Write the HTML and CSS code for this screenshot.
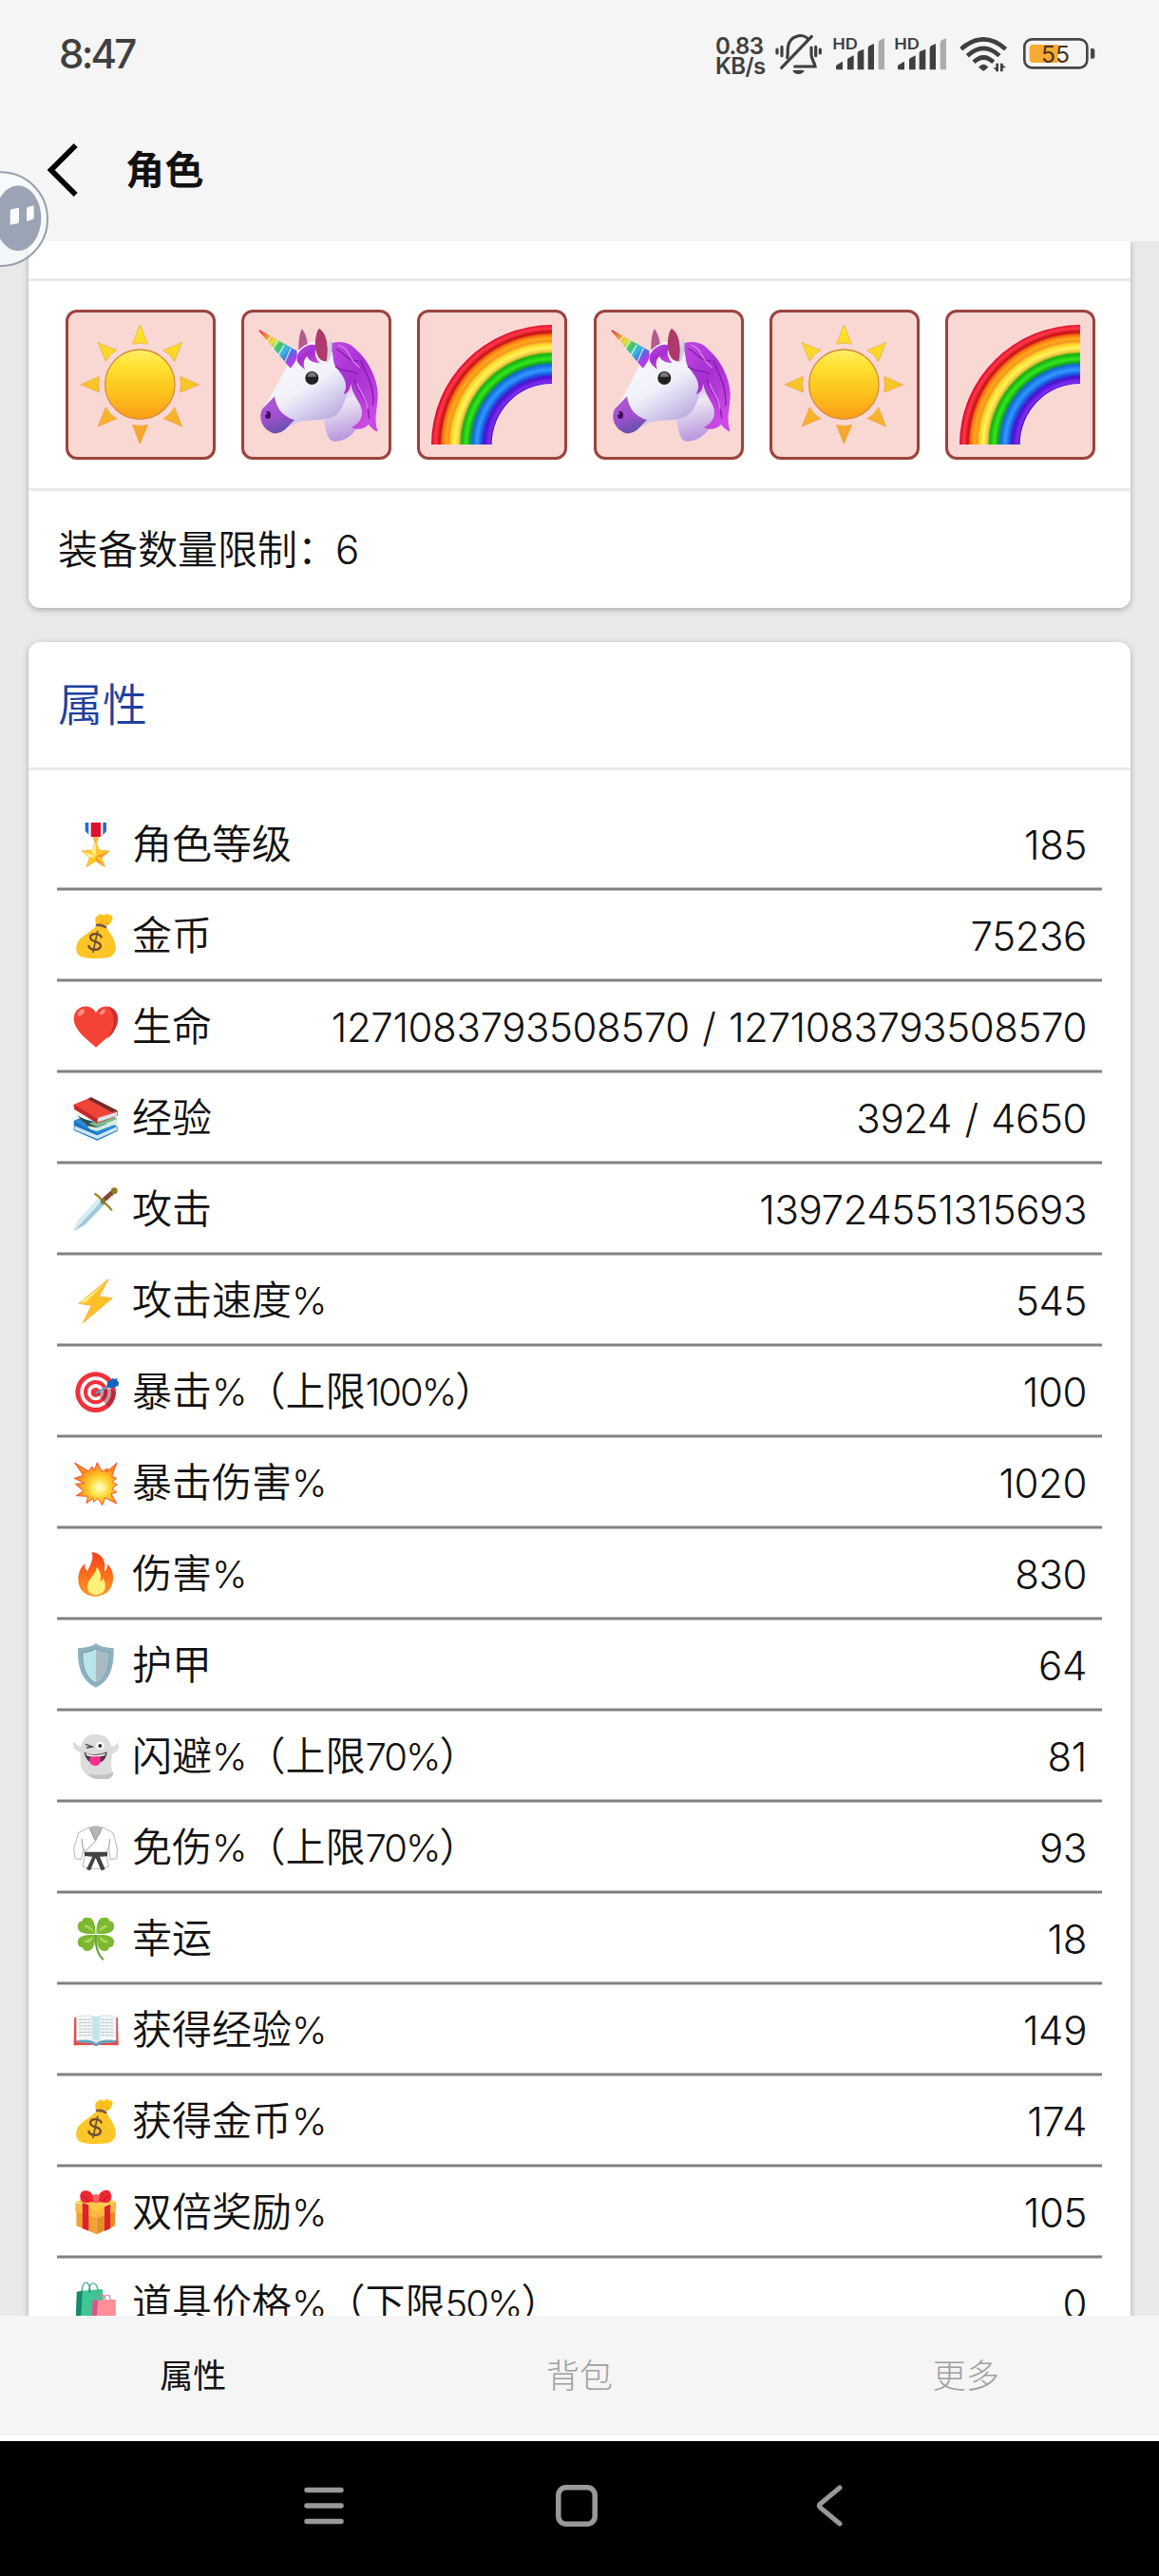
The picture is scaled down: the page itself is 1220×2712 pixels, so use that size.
FILE: index.html
```html
<!DOCTYPE html>
<html lang="zh-CN">
<head>
<meta charset="utf-8">
<title>角色</title>
<link rel="stylesheet" href="styles.css">
</head>
<body>
<svg class="defs" width="0" height="0" aria-hidden="true">
  <defs>
    <linearGradient id="sunDisc" x1="0" y1="0" x2="0" y2="1"><stop offset="0" stop-color="#fff06a"/><stop offset=".25" stop-color="#ffe02e"/><stop offset=".6" stop-color="#fdc41c"/><stop offset="1" stop-color="#fb9d18"/></linearGradient>
    <linearGradient id="sunRay" gradientUnits="userSpaceOnUse" x1="0" y1="185" x2="0" y2="565"><stop offset="0" stop-color="#fde725"/><stop offset="1" stop-color="#f5a22c"/></linearGradient>
    <linearGradient id="face" x1="0" y1="0" x2=".6" y2="1"><stop offset="0" stop-color="#fff"/><stop offset=".6" stop-color="#f0f1fa"/><stop offset="1" stop-color="#b9a9e0"/></linearGradient>
    <linearGradient id="neck" x1="0" y1="0" x2=".2" y2="1"><stop offset="0" stop-color="#b7a7df"/><stop offset=".4" stop-color="#f1e6f4"/><stop offset="1" stop-color="#b99adf"/></linearGradient>
    <linearGradient id="muzzle" x1="0" y1="0" x2=".3" y2="1"><stop offset="0" stop-color="#b05ad6"/><stop offset=".6" stop-color="#a24fd0"/><stop offset="1" stop-color="#6a51ae"/></linearGradient>
    <linearGradient id="mane" x1="0" y1="0" x2=".6" y2="1"><stop offset="0" stop-color="#c14ae6"/><stop offset=".5" stop-color="#a62fd0"/><stop offset="1" stop-color="#cc49e4"/></linearGradient>
    <linearGradient id="horn" gradientUnits="userSpaceOnUse" x1="698" y1="206" x2="808" y2="308"><stop offset="0" stop-color="#e2324a"/><stop offset=".2" stop-color="#f29a3a"/><stop offset=".36" stop-color="#e8e03c"/><stop offset=".52" stop-color="#3fc46a"/><stop offset=".68" stop-color="#37b6e6"/><stop offset=".8" stop-color="#4a70dd"/><stop offset=".92" stop-color="#b23bea"/></linearGradient>
    <radialGradient id="bow" gradientUnits="userSpaceOnUse" cx="486" cy="504" r="381"><stop offset=".49" stop-color="#3d0a9a"/><stop offset=".52" stop-color="#7d2df2"/><stop offset=".56" stop-color="#4d0fd0"/><stop offset=".585" stop-color="#1c55e0"/><stop offset=".62" stop-color="#2f9bff"/><stop offset=".66" stop-color="#1668e0"/><stop offset=".68" stop-color="#16a51c"/><stop offset=".71" stop-color="#33e81c"/><stop offset=".75" stop-color="#17b012"/><stop offset=".77" stop-color="#f0c23a"/><stop offset=".8" stop-color="#fff35a"/><stop offset=".835" stop-color="#ffd726"/><stop offset=".855" stop-color="#f7951c"/><stop offset=".88" stop-color="#ffa91c"/><stop offset=".91" stop-color="#f56d10"/><stop offset=".93" stop-color="#c90f14"/><stop offset=".965" stop-color="#ff3a48"/><stop offset="1" stop-color="#d8002a"/></radialGradient>
    <radialGradient id="boom" gradientUnits="userSpaceOnUse" cx="165" cy="1038" r="75"><stop offset="0" stop-color="#fffde0"/><stop offset=".22" stop-color="#fff176"/><stop offset=".5" stop-color="#ffca28"/><stop offset=".9" stop-color="#fb8c1c"/></radialGradient>
    <linearGradient id="flame" x1="0" y1="0" x2="0" y2="1"><stop offset="0" stop-color="#f4401f"/><stop offset=".5" stop-color="#ff6d1b"/><stop offset="1" stop-color="#ff9a2a"/></linearGradient>

    <symbol id="sun" viewBox="97 147 456 456">
      <g fill="url(#sunRay)" stroke="#e5a54a" stroke-width="2">
        <path d="M323 186L299 247Q323 240 348 247Z"/><path d="M323 562L299 502Q323 508 348 502Z"/>
        <path d="M135 375L195 349Q190 375 195 399Z"/><path d="M510 375L450 349Q454 375 450 399Z"/>
        <path d="M190 242L249 266Q228 278 215 301Z"/><path d="M456 242L396 266Q418 278 432 302Z"/>
        <path d="M190 507L215 446Q228 470 250 482Z"/><path d="M456 507L432 446Q418 470 397 482Z"/>
      </g>
      <circle cx="323" cy="374" r="110" fill="url(#sunDisc)" stroke="#d98a3e" stroke-width="4"/>
    </symbol>

    <symbol id="unicorn" viewBox="651 147 456 456">
      <path fill="url(#neck)" d="M895 470C912 500 905 553 938 554C985 552 1000 520 1015 505L1028 440L975 370L900 440Z"/>
      <path fill="#b55a8c" d="M824 275C820 240 828 205 834 199C845 215 852 235 852 262Z"/>
      <path fill="url(#face)" d="M822 268C850 235 905 225 940 262C985 300 1000 380 955 455C935 490 880 485 835 490C790 500 775 530 745 525C705 512 695 480 710 450C735 415 750 385 770 345C785 320 800 290 822 268Z"/>
      <path fill="url(#muzzle)" d="M747 412C752 450 775 478 811 487C790 500 782 530 745 529C706 515 695 478 708 452Z"/>
      <ellipse cx="726" cy="471" rx="9" ry="12" fill="#3b0d5c"/><circle cx="719" cy="466" r="4" fill="#b05ad6"/>
      <path fill="url(#mane)" d="M918 248C945 233 985 240 1005 265C1040 295 1070 350 1073 400C1074 450 1058 480 1073 523C1060 520 1050 508 1044 500C1030 515 1010 520 990 510C1020 495 1030 470 1018 440C1005 415 990 395 988 372C985 395 975 403 965 405C985 370 960 345 940 318C928 298 936 270 918 248Z"/>
      <g fill="none" stroke="#7e1cab" stroke-width="4" stroke-linecap="round"><path d="M942 262C960 270 985 305 1012 300"/><path d="M940 318C965 340 985 325 1006 340"/><path d="M1000 360C1010 400 1045 430 1046 480"/><path d="M1020 300C1040 350 1062 380 1058 440"/></g>
      <g fill="none" stroke="#dd7df5" stroke-width="4" stroke-linecap="round"><path d="M950 250C990 265 975 290 1015 320"/><path d="M1008 372C1020 405 1038 420 1040 450"/></g>
      <path fill="#cfd0e0" d="M926 225C932 260 928 290 912 306L900 290Z"/>
      <path fill="#ad3a68" d="M888 197C915 215 918 260 911 300C890 306 876 280 875 250C876 225 880 205 888 197Z"/>
      <path fill="url(#mane)" d="M879 252C858 240 825 262 818 285C815 305 828 315 843 327C836 305 840 295 850 285C855 300 868 305 890 307C875 292 872 272 879 252Z"/>
      <path fill="url(#horn)" d="M698 206C695 202 702 202 704 204L817 268C820 285 818 300 797 323Z"/>
      <g stroke="#fff" stroke-width="4" stroke-linecap="round" fill="none" opacity=".75"><path d="M722 240L735 223"/><path d="M741 262L756 236"/><path d="M760 280L777 250"/><path d="M780 302L798 262"/></g>
      <circle cx="865" cy="354" r="21" fill="#202020"/><path fill="#777" d="M851 350A14 14 0 0 1 879 350Z"/>
    </symbol>

    <symbol id="rainbow" viewBox="69 87 456 456">
      <path fill="url(#bow)" d="M105 504A381 378 0 0 1 486 126V312A190 192 0 0 0 296 504Z"/>
    </symbol>

    <symbol id="moneybag" viewBox="79 357 150 150">
      <path fill="#fcc21b" d="M154 400C150 385 152 372 160 374C166 364 174 368 178 372C186 364 196 366 198 372C208 366 208 380 204 388C200 398 192 404 186 404Z"/>
      <path fill="none" stroke="#f19534" stroke-width="3" d="M168 398L176 384M186 402L194 390"/>
      <path fill="#fcc528" d="M157 403L188 408C194 425 212 440 216 467C219 490 205 502 190 505C165 508 130 508 112 503C94 499 88 483 93 464C98 440 140 424 157 403Z"/>
      <path fill="none" stroke="#795548" stroke-width="8" stroke-linecap="round" d="M157 402Q172 400 184 408"/>
      <g fill="none" stroke="#6d4c36" stroke-width="7" stroke-linecap="round"><path d="M171 440C166 427 139 425 136 440C135 458 170 450 169 468C166 484 136 482 131 468"/><path stroke-width="5" d="M159 421L145 487"/></g>
    </symbol>
  </defs>
</svg>

<div class="screen">
  <header class="top">
    <div class="status">
      <span class="clock">8:47</span>
      <span class="speed"><span>0.83</span><span>KB/s</span></span>
      <svg class="bell" viewBox="285 45 153 129" width="51" height="43" fill="none" stroke="#3f3f3f" stroke-width="9.5" stroke-linecap="round">
        <path d="M294 96V108M309 88V116M416 88V116M430 96V108"/>
        <path d="M326 122C329 112 327 100 328 90C332 50 378 44 392 64M402 90V112C402 126 411 134 414 150H350"/>
        <path d="M403 55L308 154"/>
        <path d="M343 162H380Q376 174 361 174Q347 174 343 162Z" fill="#3f3f3f" stroke="none"/>
      </svg>
      <svg class="signal" viewBox="468 45 168 129" width="56" height="43">
        <text class="hd" x="469" y="96" textLength="80" lengthAdjust="spacingAndGlyphs">HD</text>
        <g fill="#3f3f3f"><path d="M480 150Q480 147 483 145L501 134V160H484Q480 160 480 156Z"/><path d="M516 129Q516 126 519 124L536 115V160H516Z"/><path d="M548 108Q548 104 551 102L568 95V160H548Z"/><path d="M581 94Q581 87 585 85L600 78V160H581Z"/></g>
        <path fill="#acacac" d="M614 78Q614 70 618 67L633 61V160H614Z"/>
      </svg>
      <svg class="signal second" viewBox="468 45 168 129" width="56" height="43">
        <text class="hd" x="469" y="96" textLength="80" lengthAdjust="spacingAndGlyphs">HD</text>
        <g fill="#3f3f3f"><path d="M480 150Q480 147 483 145L501 134V160H484Q480 160 480 156Z"/><path d="M516 129Q516 126 519 124L536 115V160H516Z"/><path d="M548 108Q548 104 551 102L568 95V160H548Z"/><path d="M581 94Q581 87 585 85L600 78V160H581Z"/></g>
        <path fill="#acacac" d="M614 78Q614 70 618 67L633 61V160H614Z"/>
      </svg>
      <svg class="wifi" viewBox="867 45 159 129" width="53" height="43" fill="none" stroke="#3f3f3f" stroke-width="14">
        <path d="M875 95Q946 33 1016 95"/><path d="M895 116Q946 69 996 116"/><path d="M915 136Q946 107 977 136"/>
        <path d="M930 152Q946 134 961 152L946 165Z" fill="#3f3f3f" stroke="none"/>
        <path d="M989 140V166M1003 140V166" stroke-width="8"/><path d="M976 154H990V166ZM1017 154H1002V141Z" fill="#3f3f3f" stroke="none"/>
      </svg>
      <svg class="battery" viewBox="1065 45 234 129" width="78" height="43">
        <rect x="1075" y="64" width="198" height="90" rx="24" fill="none" stroke="#474747" stroke-width="8"/>
        <path fill="#f7ab33" d="M1102 81H1181V138H1102Q1091 138 1091 127V92Q1091 81 1102 81Z"/>
        <path fill="#474747" d="M1284 93H1291Q1297 93 1297 99V119Q1297 125 1291 125H1284Z"/>
        <text class="charge" x="1128" y="137" textLength="90" lengthAdjust="spacingAndGlyphs">55</text>
      </svg>
    </div>
    <div class="titlebar">
      <svg class="back" viewBox="147 450 102 174" width="34" height="58" fill="none" stroke="#000" stroke-width="17"><path d="M239 459L161 537L239 615"/></svg>
      <h1>角色</h1>
    </div>
  </header>

  <svg class="bubble" viewBox="0 528 165 330" width="55" height="110">
    <circle cx="2" cy="692" r="148" fill="#f8fcff" fill-opacity=".72" stroke="#97a0ac" stroke-width="6"/>
    <ellipse cx="57" cy="689" rx="73" ry="103" fill="#959fb0" fill-opacity=".95"/>
    <path fill="#f8fcff" d="M39 660L60 656V700Q60 704 55 706L32 710V670Q32 661 39 660ZM90 653L107 649V688Q107 692 102 694L84 699V662Q84 655 90 653Z"/>
  </svg>

  <main class="content">
    <section class="card equip">
      <div class="equip-head"></div>
      <div class="tiles">
        <div class="tile"><svg><use href="#sun"/></svg></div>
        <div class="tile"><svg><use href="#unicorn"/></svg></div>
        <div class="tile"><svg><use href="#rainbow"/></svg></div>
        <div class="tile"><svg><use href="#unicorn"/></svg></div>
        <div class="tile"><svg><use href="#sun"/></svg></div>
        <div class="tile"><svg><use href="#rainbow"/></svg></div>
      </div>
      <p class="limit">装备数量限制：<span class="num">6</span></p>
    </section>

    <section class="card">
      <h2>属性</h2>
      <ul class="stats">
        <li><svg viewBox="79 69 150 150"><path fill="#1f6fd0" d="M120 78H187V105L176 117H132L120 105Z"/><path fill="#fff" d="M131 78H176V122H131Z"/><path fill="#dd1030" d="M138 78H169V123H138Z"/><path fill="#fcb43a" d="M143 124H164L158 140H150Z"/><path fill="#ffca28" stroke="#f0a030" stroke-width="2" d="M153 137L164 165L197 168L172 188L182 218L153 200L124 218L134 188L109 168L142 165Z"/><path fill="#fff09a" d="M153 140V184L140 168ZM112 169L153 184L136 189Z"/><path fill="#f79a30" d="M153 184L195 169L171 189ZM153 184L181 216L153 198Z"/></svg><span class="label">角色等级</span><span class="value">185</span></li>
        <li><svg><use href="#moneybag"/></svg><span class="label">金币</span><span class="value">75236</span></li>
        <li><svg viewBox="79 645 150 150"><path fill="#f44336" d="M154 788C135 770 84 735 84 698C84 655 137 645 154 679C171 645 224 655 224 698C224 735 173 770 154 788Z"/><path fill="#c53230" d="M194 661C228 668 236 725 188 762C215 725 218 690 194 661Z"/><ellipse cx="107" cy="678" rx="8" ry="13" transform="rotate(42 107 678)" fill="#ff8a80"/><ellipse cx="175" cy="676" rx="6" ry="11" transform="rotate(42 175 676)" fill="#ff8a80"/></svg><span class="label">生命</span><span class="value">1271083793508570 / 1271083793508570</span></li>
        <li><svg viewBox="79 933 150 150"><path fill="#1b77c5" d="M84 1020L103 1012L222 1038V1052L158 1082L84 1050Z"/><path fill="#cfe6f2" d="M86 1036L158 1066L220 1038V1050L158 1078L86 1048Z"/><path fill="#2d8ed3" d="M84 1020L158 1060L222 1036L205 1030L158 1050L100 1014Z"/><path fill="#3c4a40" d="M94 1003L138 1045L158 1050L150 1030Z"/><path fill="#7cb98a" d="M132 1028L207 1005L222 1014L158 1040Z"/><path fill="#d5eedd" d="M128 1036L158 1042L220 1016V1030L158 1052Q130 1050 128 1036Z"/><path fill="#c62828" d="M83 968L98 972L158 1012L222 988V1004L158 1028L86 984Z"/><path fill="#dfe3ee" d="M160 1011L220 992V1004L158 1025Z"/><path fill="#f04438" d="M84 968L139 946L222 988L158 1012Z"/><path fill="#6d2c2c" d="M139 946L222 988L205 993L128 951Z"/></svg><span class="label">经验</span><span class="value">3924 / 4650</span></li>
        <li><svg viewBox="79 81 150 150"><path fill="#9fc9d8" d="M84 229L96 197L163 124L182 143L118 209Z"/><path fill="#d6ecf5" d="M84 229L96 197L163 124L172 133Z"/><path stroke="#8c4a35" stroke-width="14" fill="none" d="M174 134L211 101"/><path stroke="#5c2f22" stroke-width="2" fill="none" d="M181 119L193 132M189 112L201 125M197 104L209 117"/><path stroke="#a98724" stroke-width="7" stroke-linecap="round" fill="none" d="M152 111Q170 124 176 135Q190 145 203 161"/><circle cx="212" cy="101" r="10" fill="#94781f"/><circle cx="176" cy="135" r="8" fill="#7d7a35"/></svg><span class="label">攻击</span><span class="value">139724551315693</span></li>
        <li><svg viewBox="79 369 150 150"><path fill="#fec029" stroke="#f9a825" stroke-width="2" stroke-linejoin="round" d="M195 379L99 457L140 463L112 519L206 440L164 434Z"/><path fill="#fff080" d="M185 392L104 454L118 455Z"/></svg><span class="label">攻击速度<span class="num">%</span></span><span class="value">545</span></li>
        <li><svg viewBox="79 657 150 150"><circle cx="153" cy="737" r="64" fill="#f0313c"/><circle cx="153" cy="737" r="49" fill="#fff"/><circle cx="153" cy="737" r="38" fill="#f0313c"/><circle cx="153" cy="737" r="26" fill="#fff"/><circle cx="153" cy="738" r="15" fill="#f0313c"/><path fill="#7f1630" opacity=".45" d="M158 742L196 724L217 738Q212 770 194 785Z"/><path stroke="#5a9fce" stroke-width="7" d="M154 740L200 714"/><path fill="#1565c0" d="M190 706L207 693L213 696L221 692V702L226 704L225 716L208 724L188 722Z"/></svg><span class="label">暴击<span class="num">%</span>（上限<span class="num">100%</span>）</span><span class="value">100</span></li>
        <li><svg viewBox="79 945 150 150"><path fill="url(#boom)" stroke="#f4512c" stroke-width="3" d="M87 960L131 987L141 972L149 984L158 959L172 987L193 978L187 990L220 960L204 1003L219 1009L206 1020L220 1029L205 1042L219 1053L202 1058L219 1089L183 1070L174 1094L160 1072L147 1084L145 1072L124 1088L129 1066L92 1064L114 1049L89 1027L118 1025L86 1009L114 1000Z"/></svg><span class="label">暴击伤害<span class="num">%</span></span><span class="value">1020</span></li>
        <li><svg viewBox="79 93 150 150"><path fill="url(#flame)" d="M140 103C170 103 188 130 181 162C187 160 190 150 190 140C204 150 210 172 208 190C205 222 182 242 153 242C122 242 98 222 98 188C98 165 108 147 119 139C118 150 121 158 127 162C135 145 150 120 140 103Z"/><path fill="#fff07a" d="M156 150C154 170 134 184 128 202C122 225 136 237 153 237C173 237 187 224 183 202C181 192 178 190 177 183C175 190 172 194 167 194C172 178 168 160 156 150Z"/></svg><span class="label">伤害<span class="num">%</span></span><span class="value">830</span></li>
        <li><svg viewBox="79 381 150 150"><path fill="#8fb0bf" d="M154 391C168 402 190 404 210 406C212 470 195 512 154 530C113 512 94 470 97 406C118 404 140 402 154 391Z"/><path fill="#b9e4ea" stroke="#5f8090" stroke-width="2" d="M154 407C166 415 180 418 196 419C197 465 185 500 154 516C122 500 110 465 112 419C128 418 142 415 154 407Z"/><path fill="#a9bac2" d="M154 409C166 416 180 419 194 420C195 464 184 498 154 514Z"/></svg><span class="label">护甲</span><span class="value">64</span></li>
        <li><svg viewBox="79 669 150 150"><path fill="#dcdcdc" d="M105 735C90 730 82 722 81 706C84 700 90 702 92 710L106 717C110 690 130 677 154 677C180 677 200 692 203 717L216 712Q215 704 222 706C228 711 227 722 222 729Q214 738 204 740C203 765 198 790 210 800C206 816 190 822 168 821C130 818 106 795 105 765Z"/><path fill="#c2c2c2" d="M127 802C155 807 180 808 208 798C210 815 185 824 165 821C148 819 136 812 127 802Z"/><circle cx="167" cy="714" r="12" fill="#fff"/><circle cx="167" cy="714" r="6" fill="#333"/><path fill="none" stroke="#444" stroke-width="4" d="M121 709L142 717L124 720"/><path fill="#4a3b3f" d="M117 734Q150 750 189 733C187 757 172 770 152 770C133 769 120 755 117 734Z"/><path fill="#fff" d="M122 738Q150 750 184 738L182 744Q150 754 124 744Z"/><path fill="#ff2f91" d="M134 752Q152 745 168 750V764Q164 778 151 777Q137 775 134 764Z"/></svg><span class="label">闪避<span class="num">%</span>（上限<span class="num">70%</span>）</span><span class="value">81</span></li>
        <li><svg viewBox="79 957 150 150"><path fill="#fff" stroke="#a8a8a8" stroke-width="2.5" d="M132 971L99 989L84 1040L88 1070L108 1073L114 1035L120 1052L113 1096Q150 1108 194 1096L187 1052L194 1035L200 1073L219 1070L222 1040L208 989L174 971L152 1012Z"/><path fill="#b5b5b5" d="M136 970Q153 963 171 970L168 990L152 1010L140 990Z"/><path fill="none" stroke="#999" stroke-width="3" d="M134 972L151 1012M174 972L152 1015L120 1048M109 1008L112 1035M198 1008L195 1035"/><path fill="#424242" d="M117 1049H190V1063L166 1064L183 1104L171 1108L153 1068L136 1108L124 1104L143 1064L118 1062Z"/></svg><span class="label">免伤<span class="num">%</span>（上限<span class="num">70%</span>）</span><span class="value">93</span></li>
        <li><svg viewBox="73.7 105 140 150" preserveAspectRatio="none"><path fill="none" stroke="#689f38" stroke-width="6" d="M144 170C140 205 150 235 166 250"/><g fill="#7cb931"><path d="M142 167C115 170 92 166 90 148C88 135 96 126 103 129C102 117 116 113 127 118C140 125 142 145 142 167Z"/><path d="M145 167C172 170 195 166 197 148C199 135 191 126 184 129C185 117 171 113 160 118C147 125 145 145 145 167Z"/><path d="M141 172C115 168 92 174 90 191C89 204 97 212 104 210C106 222 118 226 128 219C140 210 142 192 141 172Z"/><path d="M147 172C172 168 195 174 197 191C198 204 190 212 183 210C181 222 169 226 159 219C147 210 146 192 147 172Z"/></g><g fill="#aed65a"><path d="M138 162L108 144Q122 132 138 162ZM150 162L180 144Q164 132 150 162ZM137 176L107 193Q124 204 137 176ZM151 176L181 193Q164 204 151 176Z"/></g></svg><span class="label">幸运</span><span class="value">18</span></li>
        <li><svg viewBox="73.7 393 140 150" preserveAspectRatio="none"><path fill="#e24b50" d="M80 431L90 434V510L136 512L144 518L152 512L199 510V434L208 431L210 520L152 519L144 523L136 519L78 520Z"/><path fill="#5fa3c0" d="M88 503Q125 497 144 513Q165 497 200 503V511Q165 508 144 522Q125 508 88 511Z"/><path fill="#f6f8f8" stroke="#b9c7cb" stroke-width="1.5" d="M86 430Q125 420 144 432Q165 420 203 430V505Q165 498 144 511Q125 498 86 505Z"/><path fill="#c5e5ea" d="M132 426Q140 427 144 432Q150 426 156 426V501Q148 504 144 510Q140 503 132 501Z"/><path stroke="#9aa5a8" stroke-width="2" fill="none" stroke-dasharray="11 2" d="M93 439L130 438M93 449L130 448M93 459L130 458M93 469L130 468M93 479L130 478M93 489L130 488M158 438L196 439M158 448L196 449M158 458L196 459M158 468L196 469M158 478L196 479M158 488L196 489"/></svg><span class="label">获得经验<span class="num">%</span></span><span class="value">149</span></li>
        <li><svg><use href="#moneybag"/></svg><span class="label">获得金币<span class="num">%</span></span><span class="value">174</span></li>
        <li><svg viewBox="73.7 969 140 150" preserveAspectRatio="none"><path fill="#f2a133" d="M86 1040L146 1060V1117L86 1090Z"/><path fill="#e58f28" d="M146 1060L200 1040V1090L146 1117Z"/><path fill="#fbb844" d="M83 1016L146 1040L203 1014V1044L146 1066L83 1046Z"/><path fill="#ffc94d" d="M83 1014L144 995L203 1014L146 1042Z"/><path fill="#e0202c" d="M104 1018L122 1024V1106L104 1098ZM169 1030L186 1022V1099L169 1107Z"/><path fill="#ffca3c" d="M126 1036L146 1025L166 1032L146 1046Z"/><path fill="#f02534" d="M144 1012C110 1022 96 1018 97 996C98 975 118 976 128 984Q138 994 144 1012ZM144 1012C175 1022 190 1018 189 996C188 972 168 974 158 984Q148 994 144 1012Z"/><path fill="#f9625f" d="M133 996Q144 984 155 996L150 1018H138Z"/><path fill="none" stroke="#b7151f" stroke-width="3" d="M105 995Q112 1000 122 1012M182 994Q172 1000 166 1012"/></svg><span class="label">双倍奖励<span class="num">%</span></span><span class="value">105</span></li>
        <li><svg viewBox="73.7 1257 140 150" preserveAspectRatio="none"><path fill="#3fc693" d="M101 1295L163 1290L170 1400H99Z"/><path fill="#178a6d" d="M87 1299L104 1294L99 1400L84 1385Z"/><g fill="none" stroke="#2b9a85" stroke-width="3"><path d="M103 1300C100 1258 128 1258 127 1302M123 1300C122 1262 148 1262 150 1299"/></g><path fill="#ff8f95" d="M146 1326L202 1322V1402H146Z"/><path fill="#d8578c" d="M134 1324L150 1326L144 1402L131 1392Z"/><g fill="none" stroke="#d17890" stroke-width="3"><path d="M148 1330C145 1300 172 1300 172 1329M164 1326C168 1300 188 1305 186 1325"/></g></svg><span class="label">道具价格<span class="num">%</span>（下限<span class="num">50%</span>）</span><span class="value">0</span></li>
      </ul>
    </section>
  </main>

  <nav class="tabs"><span class="active">属性</span><span>背包</span><span>更多</span></nav>
  <footer class="sysnav">
    <svg viewBox="0 0 44 44" width="44" height="44" stroke="#999" stroke-width="5.5" stroke-linecap="round"><path d="M4 5.5H40M4 22H40M4 38.5H40"/></svg>
    <svg viewBox="0 0 44 44" width="44" height="44" fill="none" stroke="#999" stroke-width="5.5"><rect x="2.8" y="2.8" width="38.4" height="38.4" rx="8"/></svg>
    <svg viewBox="0 0 44 44" width="44" height="44" fill="none" stroke="#999" stroke-width="5" stroke-linecap="round" stroke-linejoin="round"><path d="M33 3L12.500 20Q10 22 12.500 24L33 41"/></svg>
  </footer>
</div>
</body>
</html>
```
FILE: styles.css
```css
* { box-sizing: border-box; }
body, h1, h2, p, ul { margin: 0; padding: 0; }
body {
  font-family: Inter, "Noto Sans CJK SC", sans-serif;
  color: #111;
  background: #000;
}
svg { display: block; flex: none; }
.defs { position: absolute; }
.screen {
  position: relative;
  width: 1220px;
  height: 2712px;
  display: flex;
  flex-direction: column;
  overflow: hidden;
}

.top { height: 254px; flex: none; background: #f5f5f5; }
.status {
  display: flex;
  align-items: flex-start;
  height: 120px;
  padding: 35px 67px 0 62px;
  color: #3f3f3f;
}
.clock { font-size: 42px; line-height: 44px; font-weight: 500; letter-spacing: -2.8px; }
.speed {
  display: flex;
  flex-direction: column;
  margin-left: auto;
  width: 54px;
  font-size: 24px;
  line-height: 21px;
  font-weight: 600;
  letter-spacing: -0.6px;
  padding-top: 3px;
}
.bell { margin-left: 8px; }
.signal { margin-left: 10px; }
.signal.second { margin-left: 9px; }
.wifi { margin-left: 12px; }
.battery { margin-left: 13px; }
.hd { font-size: 49px; font-weight: 600; fill: #3f3f3f; }
.charge { font-size: 73px; font-weight: 400; fill: #4a3416; }
.titlebar {
  display: flex;
  align-items: center;
  height: 118px;
  padding-left: 49px;
}
.titlebar h1 { margin-left: 49px; font-size: 41px; line-height: 60px; font-weight: 600; letter-spacing: 0.5px; }

.bubble { position: absolute; left: 0; top: 176px; z-index: 3; }

.content {
  height: 2184px;
  flex: none;
  overflow: hidden;
  padding: 0 30px;
  background: #e9e9e9;
}
.card {
  background: #fff;
  border-radius: 12px;
  box-shadow: 0 2px 6px rgba(0, 0, 0, .28);
}
.equip { border-radius: 0 0 12px 12px; margin-bottom: 36px; }
.equip-head { height: 42px; border-bottom: 3px solid #e9e9e9; }
.tiles {
  display: flex;
  justify-content: space-between;
  height: 221px;
  padding: 30px 37px 0 39px;
  border-bottom: 3px solid #e9e9e9;
}
.tile {
  width: 158px;
  height: 158px;
  border: 3px solid #9c433d;
  border-radius: 12px;
  background: #f9d8d4;
}
.tile svg { width: 152px; height: 152px; }
.limit { height: 123px; padding-left: 31px; font-size: 42px; line-height: 124px; font-weight: 350; }
.limit .num { margin-left: -2px; }
h2 {
  height: 135px;
  padding-left: 31px;
  border-bottom: 3px solid #e9e9e9;
  color: #1f3f9f;
  font-size: 47px;
  line-height: 132px;
  font-weight: 350;
}

.stats { list-style: none; padding: 30px; }
.stats li {
  display: flex;
  align-items: center;
  height: 96px;
  padding: 0 16px;
  border-bottom: 2px solid #808080;
  box-shadow: 0 1px #c0c0c0, inset 0 -1px #c0c0c0;
  font-size: 42px;
  line-height: 60px;
  font-weight: 350;
  white-space: nowrap;
}
.stats svg { width: 50px; height: 50px; }
.label { margin-left: 13px; padding-top: 2px; }
.label .num { font-size: 40px; letter-spacing: -2px; }
.value { margin-left: auto; padding-top: 3px; letter-spacing: -0.4px; word-spacing: 2px; }

.tabs {
  display: flex;
  align-items: center;
  height: 132px;
  flex: none;
  padding-bottom: 5px;
  background: #f5f5f5;
  border-bottom: 6px solid #fff;
}
.tabs span { flex: 1; text-align: center; font-size: 35px; font-weight: 200; color: #a0a0a0; }
.tabs .active { font-weight: 400; color: #111; }
.sysnav {
  display: flex;
  justify-content: center;
  gap: 222px;
  height: 142px;
  padding: 46px 6px 0 0;
  background: #000;
}
```
